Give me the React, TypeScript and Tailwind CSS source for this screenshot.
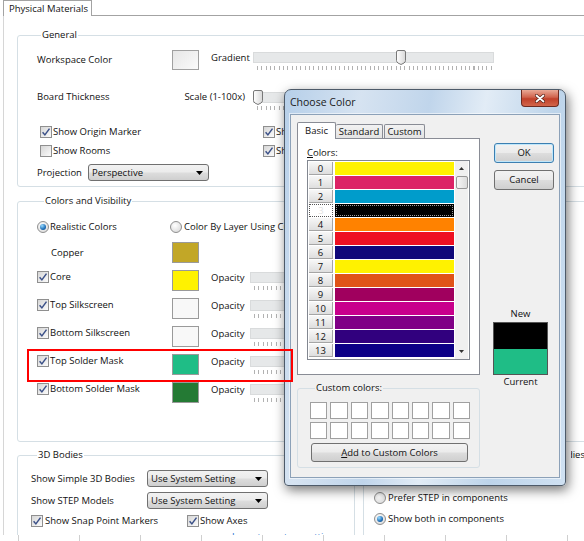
import type { ReactNode } from "react";

const btn =
  "flex items-center justify-center rounded-[3px] border border-[#707070] bg-[linear-gradient(#f2f2f2,#ebebeb_48%,#dddddd_52%,#cfcfcf)]";

const basicColors = [
  "bg-[#fff200]",
  "bg-[#dc2366]",
  "bg-[#009ccb]",
  "bg-[#000000]",
  "bg-[#ff8200]",
  "bg-[#ee1122]",
  "bg-[#10087a]",
  "bg-[#fff200]",
  "bg-[#e05418]",
  "bg-[#a0005e]",
  "bg-[#c8008c]",
  "bg-[#800086]",
  "bg-[#31007e]",
  "bg-[#0c0086]",
];

function Check({ on = true }: { on?: boolean }) {
  return (
    <span className="flex h-[12px] w-[12px] shrink-0 items-center justify-center border border-[#8f8f8f] bg-[linear-gradient(135deg,#d6d6d6,#fbfbfb)]">
      {on && (
        <svg viewBox="0 0 10 10" className="h-[10px] w-[10px]">
          <path d="M1.6 5.2 3.9 7.9 8.5 1.6" fill="none" stroke="#3c5188" strokeWidth="1.5" />
        </svg>
      )}
    </span>
  );
}

function Radio({ on = false }: { on?: boolean }) {
  return (
    <span className="flex h-[12px] w-[12px] shrink-0 items-center justify-center rounded-full border border-[#8f8f8f] bg-[radial-gradient(circle_at_40%_35%,#ffffff,#d4d4d4)]">
      {on && (
        <span className="h-[6px] w-[6px] rounded-full bg-[radial-gradient(circle_at_35%_30%,#9adcff,#1f6fb8_60%,#0b3f72)]" />
      )}
    </span>
  );
}

function Thumb({ pos }: { pos: string }) {
  return (
    <svg viewBox="0 0 10 15" className={`absolute top-[-2px] h-[15px] w-[10px] ${pos}`}>
      <defs>
        <linearGradient id="th" x1="0" y1="0" x2="1" y2="0">
          <stop offset="0" stopColor="#ffffff" />
          <stop offset="1" stopColor="#d8d8d8" />
        </linearGradient>
      </defs>
      <path
        d="M2 0.5H8Q9.5 0.5 9.5 2V10.5Q9.5 12 8 13L5 14.5 2 13Q0.5 12 0.5 10.5V2Q0.5 0.5 2 0.5Z"
        fill="url(#th)"
        stroke="#787878"
      />
    </svg>
  );
}

function Slider({ w, thumb }: { w: string; thumb?: string }) {
  return (
    <div className={`relative shrink-0 ${w}`}>
      <div className="h-[11px] border border-[#d9dbdc] bg-[#e6e8e9]" />
      <div className="ml-[4px] mt-[3px] h-[4px] bg-[repeating-linear-gradient(90deg,#b2b2b2_0_1px,transparent_1px_4.33px)]" />
      {thumb && <Thumb pos={thumb} />}
    </div>
  );
}

function Combo({ text, w }: { text: string; w: string }) {
  return (
    <div className={`${btn} h-[17px] shrink-0 !justify-between pl-[3px] pr-[5px] ${w}`}>
      <span>{text}</span>
      <svg viewBox="0 0 7 4" className="h-[4px] w-[7px]">
        <path d="M0 0H7L3.5 4Z" fill="#000" />
      </svg>
    </div>
  );
}

function Swatch({ color }: { color: string }) {
  return <span className={`block h-[21px] w-[27px] shrink-0 border border-[#9a9a9a] ${color}`} />;
}

function Group({
  title,
  className,
  legend,
  children,
}: {
  title: ReactNode;
  className: string;
  legend: string;
  children: ReactNode;
}) {
  return (
    <fieldset className={`shrink-0 rounded-[3px] border border-[#d5dfe5] ${className}`}>
      <legend className={`px-[1px] leading-[14px] ${legend}`}>{title}</legend>
      {children}
    </fieldset>
  );
}

// text that runs in under the dialog: only the part left of it shows
function Hidden({ text, w }: { text: string; w: string }) {
  return <span className={`block shrink-0 overflow-hidden whitespace-nowrap ${w}`}>{text}</span>;
}

function LayerRow({
  label,
  color,
  check = true,
  opacity = true,
}: {
  label: string;
  color: string;
  check?: boolean;
  opacity?: boolean;
}) {
  return (
    <div className="flex h-[28px] items-start">
      <div className={`flex w-[135px] shrink-0 ${check ? "items-center" : "h-[21px] items-center pl-[13px]"}`}>
        {check && <Check />}
        <span className="ml-[1px]">{label}</span>
      </div>
      <Swatch color={color} />
      {opacity && (
        <div className="ml-[12px] flex items-start">
          <span className="mt-[1px] w-[39px] shrink-0">Opacity</span>
          <div className="mt-[2px]">
            <Slider w="w-[300px]" />
          </div>
        </div>
      )}
    </div>
  );
}

function ColorList() {
  return (
    <div className="flex h-[200px] w-[163px] border border-[#828790] bg-white">
      <div className="flex w-[147px] flex-col gap-[1px] pl-[1px] pt-[1px]">
        {basicColors.map((c, i) => (
          <div key={i} className="flex h-[13px] gap-[2px]">
            {i === 3 ? (
              <span className="flex w-[24px] items-center justify-center border border-dotted border-[#555] bg-white leading-[13px] text-[#e2e2e2]">
                {i}
              </span>
            ) : (
              <span className="flex w-[24px] items-center justify-center border-b border-r border-[#a5a5a5] bg-[linear-gradient(#f7f7f7,#dedede)] leading-[13px]">
                {i}
              </span>
            )}
            <span className={`w-[119px] ${c} ${i === 3 ? "outline outline-1 -outline-offset-2 outline-dotted outline-[#9a9a9a]" : ""}`} />
          </div>
        ))}
      </div>
      <div className="flex w-[13px] flex-col items-center bg-[#f0f0f0]">
        <div className="flex h-[15px] items-center">
          <svg viewBox="0 0 5 3" className="h-[3px] w-[5px]">
            <path d="M0 3H5L2.5 0Z" fill="#333" />
          </svg>
        </div>
        <div className="h-[13px] w-[12px] rounded-[2px] border border-[#979797] bg-[linear-gradient(90deg,#f6f6f6,#dcdcdc)]" />
        <div className="flex-1" />
        <div className="flex h-[15px] items-center">
          <svg viewBox="0 0 5 3" className="h-[3px] w-[5px]">
            <path d="M0 0H5L2.5 3Z" fill="#333" />
          </svg>
        </div>
      </div>
    </div>
  );
}

function ChooseColor() {
  return (
    <div className="absolute left-[284px] top-[89px] z-10 h-[397px] w-[282px] rounded-b-[4px] rounded-t-[7px] border border-[#4d5a69] bg-[linear-gradient(100deg,#b6cfe9_0%,#d6e3f1_22%,#c0d5eb_42%,#e2ecf6_58%,#bdd4ea_78%,#d0e1f2_100%)] shadow-[2px_4px_12px_rgba(0,0,0,0.55)]">
      <div className="flex h-[24px] items-start justify-between">
        <span className="pl-[5px] pt-[5px] text-[10.5px] leading-[14px] text-[#1a1a1a]">Choose Color</span>
        <div className="mr-[6px] flex h-[17px] w-[38px] items-center justify-center rounded-b-[4px] border border-t-0 border-[#6e2a20] bg-[linear-gradient(#e9a996,#d0634d_45%,#c0402a_55%,#d2654a)]">
          <svg viewBox="0 0 10 9" className="h-[9px] w-[10px]">
            <path d="M1.5 1.5 8.5 7.5M8.5 1.5 1.5 7.5" stroke="#4a1a12" strokeWidth="3" strokeLinecap="round" />
            <path d="M1.5 1.5 8.5 7.5M8.5 1.5 1.5 7.5" stroke="#fff" strokeWidth="1.8" strokeLinecap="round" />
          </svg>
        </div>
      </div>
      <div className="mx-[5px] flex h-[364px] border border-[#8ca1b8] bg-[#f0f0f0] pl-[6px] pt-[7px] shadow-[0_0_0_1px_rgba(255,255,255,0.55)]">
        <div className="w-[183px] shrink-0">
          <div className="flex h-[16px] items-end">
            <div className="relative z-10 -mb-[1px] flex h-[17px] w-[39px] items-center justify-center rounded-t-[2px] border border-b-0 border-[#898c95] bg-white">
              Basic
            </div>
            <div className="flex h-[14px] w-[47px] items-center justify-center rounded-t-[2px] border border-b-0 border-l-0 border-[#898c95] bg-[linear-gradient(#f2f2f2,#e3e3e3)]">
              Standard
            </div>
            <div className="ml-[1px] flex h-[14px] w-[41px] items-center justify-center rounded-t-[2px] border border-b-0 border-[#898c95] bg-[linear-gradient(#f2f2f2,#e3e3e3)]">
              Custom
            </div>
          </div>
          <div className="h-[237px] border border-[#898c95] bg-white pl-[9px] pt-[7px]">
            <div className="leading-[14px]">
              <span className="underline">C</span>olors:
            </div>
            <ColorList />
          </div>
          <Group title="Custom colors:" className="mt-[6px] w-[183px] pb-[5px] pl-[12px]" legend="ml-[5px]">
            <div className="mt-[7px] grid w-[160px] grid-cols-8 gap-[3px]">
              {Array.from({ length: 16 }).map((_, i) => (
                <span key={i} className="h-[17px] border border-[#a0a0a0] bg-white" />
              ))}
            </div>
            <div className={`${btn} ml-[1px] mt-[4px] h-[19px] w-[157px]`}>
              <span>
                <span className="underline">A</span>dd to Custom Colors
              </span>
            </div>
          </Group>
        </div>
        <div className="ml-[13px] flex w-[62px] shrink-0 flex-col pt-[21px]">
          <div className={`${btn} ml-[1px] h-[20px] w-[60px] !border-[#3c7fb1] shadow-[inset_0_0_0_1px_#bfe7fb]`}>OK</div>
          <div className={`${btn} ml-[1px] mt-[7px] h-[20px] w-[60px]`}>Cancel</div>
          <div className="mt-[117px] w-[55px] text-center leading-[14px]">New</div>
          <div className="mt-[1px] flex h-[53px] w-[55px] flex-col border border-[#555]">
            <span className="flex-1 bg-black" />
            <span className="flex-1 bg-[#1fbd86]" />
          </div>
          <div className="w-[55px] text-center leading-[14px]">Current</div>
        </div>
      </div>
    </div>
  );
}

export default function App() {
  return (
    <div className="relative h-[541px] w-[584px] overflow-hidden bg-white font-['Open_Sans',sans-serif] text-[9.5px] leading-[14px] text-[#111]">
      {/* tab strip */}
      <div className="flex h-[16px]">
        <div className="ml-[3px] w-[89px] border-x border-t border-[#a3a3a3] pl-[5px] pt-[1px]">Physical Materials</div>
        <div className="flex-1 border-b border-[#a3a3a3]" />
      </div>

      {/* panel */}
      <div className="ml-[3px] h-[519px] overflow-hidden border-l border-[#d6d6d6] pl-[13px]">
        <Group title="General" className="mt-[12px] w-[620px] pb-[4px] pl-[19px]" legend="ml-[4px]">
          <div className="mt-[8px] flex h-[20px] items-start">
            <span className="w-[135px] shrink-0 self-center">Workspace Color</span>
            <span className="block h-[20px] w-[27px] shrink-0 border border-[#a0a0a0] bg-[linear-gradient(135deg,#e6e6e6,#fafafa)]" />
            <span className="ml-[12px] w-[42px] shrink-0 pt-[1px]">Gradient</span>
            <div className="mt-[2px]">
              <Slider w="w-[241px]" thumb="left-[143px]" />
            </div>
          </div>
          <div className="mt-[18px] flex h-[20px] items-start">
            <span className="w-[135px] shrink-0 pt-[2px]">Board Thickness</span>
            <span className="mr-[8px] w-[73px] shrink-0 pt-[2px] text-right">Scale (1-100x)</span>
            <div className="mt-[4px]">
              <Slider w="w-[300px]" thumb="left-0" />
            </div>
          </div>
          <div className="mt-[15px] flex h-[18px] items-center">
            <div className="flex w-[226px] shrink-0 items-center pl-[3px]">
              <Check />
              <span className="ml-[1px]">Show Origin Marker</span>
            </div>
            <Check />
            <span className="ml-[1px]">
              <Hidden text="Show Component Reference Point" w="w-[10px]" />
            </span>
          </div>
          <div className="mt-[1px] flex h-[18px] items-center">
            <div className="flex w-[226px] shrink-0 items-center pl-[3px]">
              <Check on={false} />
              <span className="ml-[1px]">Show Rooms</span>
            </div>
            <Check />
            <span className="ml-[1px]">
              <Hidden text="Show Selection Grip Handles" w="w-[10px]" />
            </span>
          </div>
          <div className="mt-[3px] flex h-[19px] items-center">
            <span className="w-[51px] shrink-0">Projection</span>
            <Combo text="Perspective" w="w-[121px]" />
          </div>
        </Group>

        <Group title="Colors and Visibility" className="mt-[7px] w-[620px] pb-[31px] pl-[19px]" legend="ml-[7px]">
          <div className="mt-[11px] flex h-[16px] items-center">
            <div className="flex w-[133px] shrink-0 items-center">
              <Radio on />
              <span className="ml-[1px]">Realistic Colors</span>
            </div>
            <Radio />
            <span className="ml-[2px]">
              <Hidden text="Color By Layer Using Current Colors" w="w-[102px]" />
            </span>
          </div>
          <div className="mt-[7px]">
            <LayerRow label="Copper" color="bg-[#c2a727]" check={false} opacity={false} />
            <LayerRow label="Core" color="bg-[#fff200]" />
            <LayerRow label="Top Silkscreen" color="bg-[#f8f8f8]" />
            <LayerRow label="Bottom Silkscreen" color="bg-[#f8f8f8]" />
            <LayerRow label="Top Solder Mask" color="bg-[#1fbd86]" />
            <LayerRow label="Bottom Solder Mask" color="bg-[#247a34]" />
          </div>
        </Group>

        <div className="mt-[6px] flex">
          <Group title="3D Bodies" className="h-[110px] w-[338px] pl-[13px]" legend="ml-[6px]">
            <div className="mt-[8px] flex h-[17px] items-center">
              <span className="w-[116px] shrink-0">Show Simple 3D Bodies</span>
              <Combo text="Use System Setting" w="w-[121px]" />
            </div>
            <div className="mt-[5px] flex h-[17px] items-center">
              <span className="w-[116px] shrink-0">Show STEP Models</span>
              <Combo text="Use System Setting" w="w-[121px]" />
            </div>
            <div className="mt-[5px] flex h-[14px] items-center">
              <div className="flex w-[156px] shrink-0 items-center">
                <Check />
                <span className="ml-[2px]">Show Snap Point Markers</span>
              </div>
              <Check />
              <span className="ml-[1px]">Show Axes</span>
            </div>
            <div className="mt-[2px] pl-[201px] text-[#1a6fd0]">Jump to custom settings</div>
          </Group>
          <Group
            title={
              <span className="flex w-[14px] justify-end overflow-hidden whitespace-nowrap">
                <span className="shrink-0">Component STEP Bodies</span>
              </span>
            }
            className="ml-[8px] h-[110px] w-[240px] pl-[10px]"
            legend="ml-[5px] flex w-[207px] justify-end"
          >
            <div className="mt-[29px] flex h-[14px] items-center">
              <Radio />
              <span className="ml-[2px]">Prefer STEP in components</span>
            </div>
            <div className="mt-[7px] flex h-[14px] items-center">
              <Radio on />
              <span className="ml-[2px]">Show both in components</span>
            </div>
          </Group>
        </div>
      </div>

      {/* cut edge of the next capture */}
      <div className="ml-[18px] h-[6px] bg-[repeating-linear-gradient(90deg,#cfcfcf_0_1px,transparent_1px_61px)]" />

      <ChooseColor />

      {/* annotation */}
      <div className="absolute left-[27px] top-[349px] z-20 h-[33px] w-[266px] border-2 border-[#ff0000]" />
    </div>
  );
}
